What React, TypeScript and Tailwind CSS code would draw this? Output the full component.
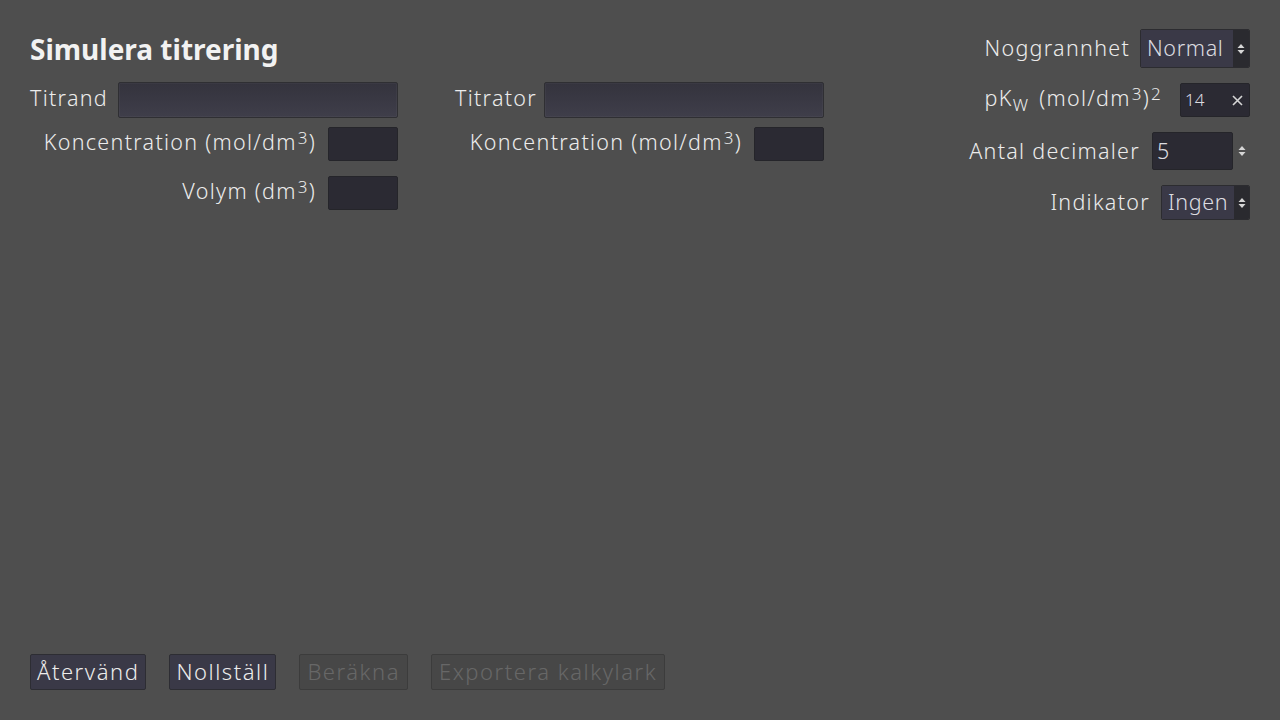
import React from "react";

const font = { fontFamily: '"Noto Sans", "Open Sans", sans-serif' };

function Sup({ children }: { children: React.ReactNode }) {
  return <sup className="text-[17px] relative -top-[6px] align-baseline ml-[1px]">{children}</sup>;
}

function UpDown({ className = "" }: { className?: string }) {
  return (
    <svg width="8" height="12" viewBox="0 0 8 12" className={className}>
      <path d="M4 1 L7.5 5 H0.5 Z" fill="#d6d6d6" />
      <path d="M4 11 L7.5 7 H0.5 Z" fill="#d6d6d6" />
    </svg>
  );
}

function SmallBox() {
  return <div className="w-[70px] h-[34px] bg-[#2b2a33] border border-[#25252a] rounded-[2px]" />;
}

function WideBox() {
  return (
    <div className="w-[280px] h-[36px] rounded-[2px] border border-[#2f2f33] bg-gradient-to-b from-[#34333d] to-[#3f3e4a] shadow-[inset_0_0_0_1px_rgba(255,255,255,0.03)]" />
  );
}

function Label({ children }: { children: React.ReactNode }) {
  return <span className="relative -top-[2px]">{children}</span>;
}

function Group({ name, width, sub }: { name: string; width: string; sub: { label: React.ReactNode }[] }) {
  return (
    <div className={"flex flex-col " + width}>
      <div className="flex items-center justify-between h-[36px]">
        <Label>{name}</Label>
        <WideBox />
      </div>
      {sub.map((s, i) => (
        <div
          key={i}
          className={
            "flex items-center justify-end gap-[12px] h-[34px] " + (i === 0 ? "mt-[9px]" : "mt-[15px]")
          }
        >
          <Label>{s.label}</Label>
          <SmallBox />
        </div>
      ))}
    </div>
  );
}

function Select({ value, width }: { value: string; width: string }) {
  return (
    <div className={"flex h-full rounded-[2px] overflow-hidden border border-[#2c2c30] " + width}>
      <div className="flex-1 flex items-center px-[6px] bg-[#3a3947] text-[#dcdce0] tracking-[0.03em]">{value}</div>
      <div className="w-[16px] flex items-center justify-center bg-[#2a2a2f]">
        <UpDown />
      </div>
    </div>
  );
}

type Btn = { label: string; disabled?: boolean };
const buttons: Btn[] = [
  { label: "Återvänd" },
  { label: "Nollställ" },
  { label: "Beräkna", disabled: true },
  { label: "Exportera kalkylark", disabled: true },
];

export default function App() {
  return (
    <div
      style={font}
      className="w-full h-screen bg-[#4e4e4e] text-[#ececec] text-[21.5px] font-light tracking-[0.06em] flex flex-col px-[30px] pt-[30px] pb-[30px]"
    >
      <div className="flex justify-between">
        {/* left side */}
        <div className="flex flex-col">
          <h1 className="text-[28px] font-bold tracking-normal leading-[38px] text-[#f2f2f2]">Simulera titrering</h1>
          <div className="flex gap-[57px] mt-[14px]">
            <Group
              name="Titrand"
              width="w-[368px]"
              sub={[
                { label: <>Koncentration (mol/dm<Sup>3</Sup>)</> },
                { label: <>Volym (dm<Sup>3</Sup>)</> },
              ]}
            />
            <Group name="Titrator" width="w-[369px]" sub={[{ label: <>Koncentration (mol/dm<Sup>3</Sup>)</> }]} />
          </div>
        </div>

        {/* right side */}
        <div className="flex flex-col items-end -mt-[1px]">
          <div className="flex items-center justify-end h-[39px] gap-[10px]">
            <span>Noggrannhet</span>
            <Select value="Normal" width="w-[110px]" />
          </div>
          <div className="flex items-center justify-end h-[34px] gap-[18px] mt-[15px]">
            <Label>
              pK<sub className="text-[17px] relative top-[5px] align-baseline">W</sub>
              <span className="ml-[10px]">(mol/dm<Sup>3</Sup>)<Sup>2</Sup></span>
            </Label>
            <div className="w-[70px] h-full bg-[#2b2a33] border border-[#25252a] rounded-[2px] flex items-center justify-between pl-[4px] pr-[6px]">
              <span className="text-[17px] text-[#dcdce0] tracking-normal">14</span>
              <svg width="11" height="11" viewBox="0 0 11 11">
                <path d="M1 1 L10 10 M10 1 L1 10" stroke="#d6d6d6" strokeWidth="1.6" />
              </svg>
            </div>
          </div>
          <div className="flex items-center justify-end h-[38px] gap-[12px] mt-[15px]">
            <span>Antal decimaler</span>
            <div className="flex items-center h-full">
              <div className="w-[81px] h-full bg-[#2b2a33] border border-[#25252a] rounded-[2px] flex items-center px-[4px] text-[#dcdce0]">
                5
              </div>
              <div className="w-[17px] flex justify-center">
                <UpDown />
              </div>
            </div>
          </div>
          <div className="flex items-center justify-end h-[35px] gap-[11px] mt-[15px]">
            <span>Indikator</span>
            <Select value="Ingen" width="w-[89px]" />
          </div>
        </div>
      </div>

      {/* bottom buttons */}
      <div className="mt-auto flex gap-[23px]">
        {buttons.map((b) => (
          <div
            key={b.label}
            className={
              "h-[36px] flex items-center rounded-[2px] border text-[22px] tracking-[0.07em] " +
              (b.disabled
                ? "px-[7px] bg-[#474747] border-[#3c3c3c] text-[#676767]"
                : "px-[6px] bg-[#3a3947] border-[#2d2d33] text-[#ececec]")
            }
          >
            <span className="relative -top-[1px]">{b.label}</span>
          </div>
        ))}
      </div>
    </div>
  );
}
